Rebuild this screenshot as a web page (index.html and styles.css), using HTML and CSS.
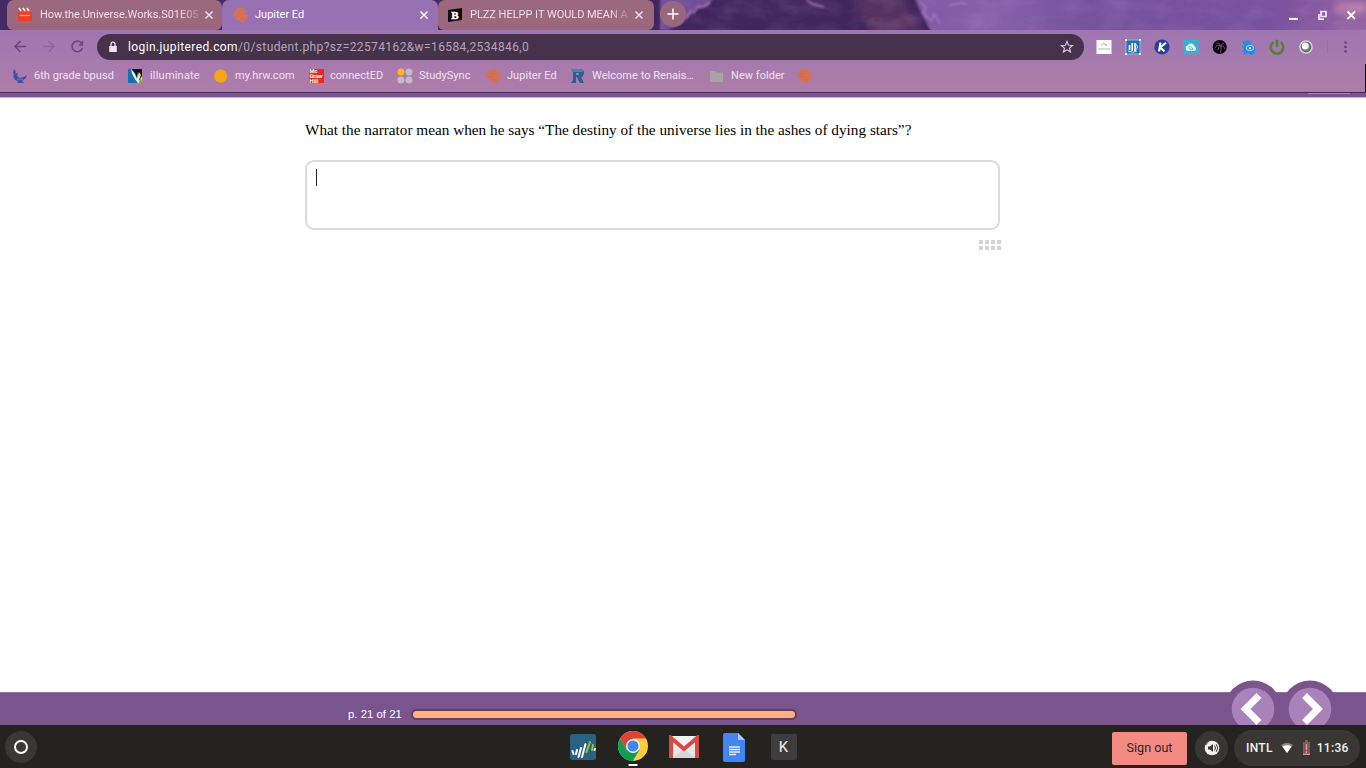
FILE: index.html
```html
<!DOCTYPE html>
<html lang="en">
<head>
<meta charset="utf-8">
<title>Jupiter Ed</title>
<link rel="stylesheet" href="styles.css">
</head>
<body>
<svg class="defs" width="0" height="0" aria-hidden="true">
  <symbol id="jupiter" viewBox="0 0 16 16">
    <path d="M3 3 6 1h6l2 1-3 1.5 4 .5-1 2-3 .5 1 1 3.5.5v3l-3 1.5-1 3-3-.5-2-2-3-.5L4 10 1 9l1-1.5L1 6l2-1Z" fill="#db704c"/>
    <path d="M4 6h6M3 9h5M8 12.4l4-.7M7 3.6l4-.2" stroke="#bd6d7b" stroke-width=".8"/>
  </symbol>
  <symbol id="close" viewBox="0 0 10 10"><path d="m1.5 1.5 7 7m0-7-7 7" stroke="currentColor" stroke-width="1.5" fill="none"/></symbol>
</svg>

<header class="browser">
  <div class="tabstrip">
    <svg class="sky" width="1366" height="30" viewBox="0 0 1366 30" preserveAspectRatio="none" aria-hidden="true">
      <defs>
        <linearGradient id="skyfill" x1="0" x2="1"><stop offset="0" stop-color="#432b63"/><stop offset=".49" stop-color="#4a2b65"/><stop offset=".66" stop-color="#7d58a2"/><stop offset=".72" stop-color="#8860aa"/><stop offset=".8" stop-color="#76529d"/><stop offset=".93" stop-color="#7951a0"/><stop offset="1" stop-color="#94639f"/></linearGradient>
        <filter id="soft" x="-10%" y="-40%" width="120%" height="180%"><feGaussianBlur stdDeviation="3"/></filter>
        <filter id="fine" x="-10%" y="-20%" width="120%" height="140%"><feGaussianBlur stdDeviation=".9"/></filter>
        <filter id="mist" x="0" y="0" width="100%" height="100%"><feTurbulence type="fractalNoise" baseFrequency=".03 .06" numOctaves="4" seed="3"/><feColorMatrix values="0 0 0 0 .66  0 0 0 0 .45  0 0 0 0 .8  1.8 0 0 0 -.75"/></filter>
      </defs>
      <rect width="1366" height="30" fill="url(#skyfill)"/>
      <path d="M650-8h262l8 18 14 28H650Z" fill="#3f275d" filter="url(#fine)"/>
      <path d="M850-4h52l22 38h-50Z" fill="#57335f" filter="url(#soft)"/>
      <path d="M660-2h53l-4 8-14 4-6 6-7 8-14 6h-8Z" fill="#73509a" filter="url(#fine)"/>
      <path d="m686 18 5-7 3 2 4-7 5 1 7-5M807 0l5 4 12 3M920 2l6 5-3 6 9 8 2-7 6 10M950 5l12-2 5 1" fill="none" stroke="#a878b5" stroke-width="1.4" filter="url(#fine)"/>
      <ellipse cx="1350" cy="8" rx="17" ry="6" fill="#b87aa9" filter="url(#soft)"/>
      <rect x="660" width="706" height="30" filter="url(#mist)" opacity=".18"/>
    </svg>
    <nav class="tabs">
      <div class="tab tab-video">
        <svg width="16" height="16" viewBox="0 0 16 16"><path d="M2 1h12v3H2z" fill="#b8615f"/><path d="m2 1 2 3m2-3 2 3m2-3 2 3" stroke="#fff" stroke-width="1.4"/><path d="M1 5h14v9H1z" fill="#ed3d27"/><path d="M3 8.5h10" stroke="#f5b5a8" stroke-width="1.2"/></svg>
        <span class="tab-title fade">How.the.Universe.Works.S01E05</span>
        <svg class="close" width="10" height="10"><use href="#close"/></svg>
      </div>
      <div class="tab tab-active">
        <svg width="16" height="16"><use href="#jupiter"/></svg>
        <span class="tab-title">Jupiter Ed</span>
        <svg class="close" width="10" height="10"><use href="#close"/></svg>
      </div>
      <div class="tab tab-brainly">
        <svg width="16" height="16" viewBox="0 0 16 16"><path d="m1 3 14-2v12L1 15Z" fill="#080407"/><text x="4.2" y="11.8" font-family="Liberation Serif, serif" font-size="11" font-weight="700" fill="#fff" stroke="#fff" stroke-width=".5">B</text></svg>
        <span class="tab-title fade">PLZZ HELPP IT WOULD MEAN A</span>
        <svg class="close" width="10" height="10"><use href="#close"/></svg>
      </div>
      <div class="new-tab"><svg width="12" height="12" viewBox="0 0 12 12"><path d="M6 .5v11M.5 6h11" stroke="#fff" stroke-width="1.5"/></svg></div>
    </nav>
    <div class="window-buttons">
      <svg width="76" height="20" viewBox="0 0 76 20"><path d="M4 13.9h9" stroke="#fff" stroke-width="2"/><path d="M36 6.5h5v5h-5zM34 9v5.2h5" fill="none" stroke="#f5e8fa" stroke-width="1.7"/><path d="m62.5 6.5 7.5 7.5m0-7.5L62.5 14" stroke="#fff" stroke-width="1.8"/></svg>
    </div>
  </div>

  <div class="toolbar">
    <svg class="nav-icons" width="97" height="34" viewBox="0 0 97 34" fill="none" stroke-width="1.6">
      <path d="M26 16.5H15m5.5-5.5L15 16.5l5.5 5.5" stroke="#684979"/>
      <path d="M43 16.5h11M48.5 11l5.5 5.5-5.5 5.5" stroke="#8d65a0"/>
      <path d="M81.2 12.8a5.3 5.3 0 1 0 1.2 5.2" stroke="#684979"/><path d="M83.2 10.5v5.2H78Z" fill="#684979"/>
    </svg>
    <div class="omnibox">
      <svg width="10" height="12" viewBox="0 0 10 12"><path d="M1.2 5h7.6v6H1.2z" fill="#eee4f2"/><path d="M3 5V3.1a2 2 0 0 1 4 0V5" fill="none" stroke="#eee4f2" stroke-width="1.3"/></svg>
      <span class="url"><b>login.jupitered.com</b>/0/student.php?sz=22574162&amp;w=16584,2534846,0</span>
      <svg class="star" width="14" height="14" viewBox="0 0 14 14"><path d="m7 1.5 1.6 3.7 4 .3-3.1 2.6 1 3.9L7 9.9 3.5 12l1-3.9L1.4 5.5l4-.3Z" fill="none" stroke="#dfcfe5" stroke-width="1.1"/></svg>
    </div>
    <div class="extensions">
      <svg width="16" height="16" viewBox="0 0 16 16"><path d="M.5 1h15v14H.5z" fill="#fff"/><path d="M5 6.5q3-4 5 0M9 5.5l2 1" fill="none" stroke="#879487" stroke-width=".8"/><path d="M2 10h12" stroke="#9cb08f" stroke-width=".9"/></svg>
      <svg width="16" height="16" viewBox="0 0 16 16"><path d="M1 1h14v14H1z" fill="#2471b2" stroke="#8fbcdf"/><path d="M0 0h2v2H0zm14 0h2v2h-2zM0 14h2v2H0zm14 0h2v2h-2z" fill="#e8f2f8"/><path d="M4.5 6v5M7.2 4v8M10 4v8" stroke="#fff" stroke-width="1.6"/><path d="M10 4.5q5 3.5 0 7M3 12q5 2.5 9 0" stroke="#d7ecf8" fill="none"/></svg>
      <svg width="16" height="16" viewBox="0 0 16 16"><circle cx="8" cy="8" r="7.6" fill="#273f9d"/><path d="M6.5 3.5 5 12.4M12 3.8 6.2 8.5l4.3 3.9" fill="none" stroke="#fff" stroke-width="2.1"/></svg>
      <svg width="16" height="16" viewBox="0 0 16 16"><rect x=".5" y=".8" width="15" height="14.4" rx="1" fill="#35b3cd"/><path d="M4.3 11.8a2.8 2.8 0 0 1 .5-5.2 3.6 3.6 0 0 1 6.8 1.2 2.1 2.1 0 0 1 0 4Z" fill="#fff"/><path d="M7 10.2a1.4 1.4 0 1 1 1.5-2l1.5 2H7" fill="none" stroke="#35b3cd"/></svg>
      <svg width="16" height="16" viewBox="0 0 16 16"><circle cx="7.7" cy="8" r="7.1" fill="#09030c"/><path d="M8.6 14q1-4 .4-7M9 7Q4 5 3 9M9 7Q6 7 6 11M9 7Q7 3 4.5 4M9 7q3-1 4 3M9 7q1-3 3-3" fill="none" stroke="#79517a" stroke-width=".9"/></svg>
      <svg width="16" height="16" viewBox="0 0 16 16"><path d="m2 1 3 2 3-2 2 1 1 3 4 3v6l-4 2-3-2-5 2 1-3-2-1 2-2-3-3h3Z" fill="#258ce4"/><ellipse cx="10" cy="9" rx="3.6" ry="2.7" fill="none" stroke="#a8d5ff"/><circle cx="10" cy="9" r="1.2" fill="#eaf7ff"/></svg>
      <svg width="16" height="16" viewBox="0 0 16 16"><path d="M4.3 3.2A6.3 6.3 0 1 0 11.7 3.2M8 .8v7" fill="none" stroke="#568238" stroke-width="2.7"/></svg>
      <svg width="16" height="16" viewBox="0 0 16 16"><circle cx="8" cy="8" r="6.8" fill="#d6d0d4"/><circle cx="8" cy="8" r="4.8" fill="#708177" stroke="#566559"/><circle cx="7.2" cy="7" r="3.4" fill="#fff"/></svg>
    </div>
    <svg class="menu" width="36" height="20" viewBox="0 0 36 20"><path d="M.5 4v12" stroke="#99709f"/><g fill="#68456f"><circle cx="18.5" cy="5.5" r="1.3"/><circle cx="18.5" cy="10" r="1.3"/><circle cx="18.5" cy="14.5" r="1.3"/></g></svg>
  </div>

  <nav class="bookmarks">
    <span><svg width="16" height="16" viewBox="0 0 16 16"><path d="m2 1 2 3-1 2 3-1-1 3 3 2 4-1 3-2-1 3-4 3 2 2H5l1-2-3-1-2-4 1-1-1-2Z" fill="#3d50a1"/><path d="m5 11 6 .3" stroke="#7c78bd"/></svg>6th grade bpusd</span>
    <span><svg width="16" height="16" viewBox="0 0 16 16"><path d="M1 1h14v14H1z" fill="#151015"/><path d="M1 1h4q5 5 6 14H1z" fill="#1870ad"/><path d="M4 1q1 7 7 14h4V8l-3 5q1-4-1-9l-1 7Q8 5 4 1Z" fill="#effaf4"/><path d="m12 4-.5 9L14 7" fill="#f1d848"/><path d="m14 9-2 6h3" fill="#64a43b"/></svg><em class="t-illuminate">illuminate</em></span>
    <span><svg width="16" height="16" viewBox="0 0 16 16"><circle cx="7.6" cy="8" r="6.6" fill="#f7a512"/></svg><em>my.hrw.com</em></span>
    <span><svg width="16" height="16" viewBox="0 0 16 16"><path d="M1 1h15v14H1z" fill="#ed2624"/><g fill="#fff" font-family="Roboto, sans-serif" font-size="5.8" font-weight="700"><text x="1.5" y="5">Mc</text><text x="1.5" y="10" textLength="13">Graw</text><text x="1.5" y="14.6">Hill</text></g></svg><em>connectED</em></span>
    <span><svg width="16" height="16" viewBox="0 0 16 16"><circle cx="3.9" cy="4" r="3.5" fill="#ffb51b"/><g fill="#c4bcc5"><circle cx="12" cy="4" r="3.5"/><circle cx="3.9" cy="12.1" r="3.5"/><circle cx="12" cy="12.1" r="3.5"/></g></svg><em>StudySync</em></span>
    <span><svg width="16" height="16"><use href="#jupiter"/></svg><em>Jupiter Ed</em></span>
    <span><svg width="16" height="16" viewBox="0 0 16 16"><path d="M1 1h9q4 0 4 4 0 3-3 4l3 6h-4L7 9H6v6H1l2-3V4Z" fill="#245f98"/><path d="M1 1h9q3 0 3 3H3Z" fill="#4f80ae"/><path d="M6 5h3v2H6z" fill="#a27baf"/></svg><em>Welcome to Renais…</em></span>
    <span><svg width="16" height="16" viewBox="0 0 16 16"><path d="M1 3h5l1.5 1.5H14V14H1Z" fill="#a5a5a5"/></svg><em>New folder</em></span>
    <span><svg width="16" height="16"><use href="#jupiter"/></svg></span>
  </nav>
  <div class="page-edge"><i></i></div>
</header>

<main class="content">
  <p class="question">What the narrator mean when he says “The destiny of the universe lies in the ashes of dying stars”?</p>
  <div class="answer"><i class="caret"></i></div>
  <svg class="grip" width="22" height="10" viewBox="0 0 22 10" fill="#d5d5d5"><path d="M0 0h4v4H0zm6 0h4v4H6zm6 0h4v4h-4zm6 0h4v4h-4zM0 6h4v4H0zm6 0h4v4H6zm6 0h4v4h-4zm6 0h4v4h-4z"/></svg>
</main>

<footer class="pager">
  <span class="page-number">p. 21 of 21</span>
  <div class="progress"></div>
  <svg class="page-buttons" width="140" height="45" viewBox="0 0 140 45">
    <g fill="#7a548c"><circle cx="27" cy="29" r="28.5"/><circle cx="84" cy="29" r="28.5"/></g>
    <g fill="#a882b9"><circle cx="27" cy="29" r="21.3"/><circle cx="84" cy="29" r="21.3"/></g>
    <path d="M33 15.5 19.5 29 33 42.5M78.5 15.5 92 29 78.5 42.5" fill="none" stroke="#fff" stroke-width="7"/>
  </svg>
</footer>

<section class="shelf">
  <div class="launcher"><i></i></div>
  <div class="apps">
    <svg width="28" height="28" viewBox="0 0 28 28"><rect x="1" y="1" width="26" height="26" rx="2.5" fill="#296281"/><g fill="none" stroke="#fff" stroke-width="2" stroke-linecap="round"><path d="m3.5 18 1 3M8 17l-1 4M12 15 9.5 24M16.5 11l-3.5 13M26 16l-.5 1"/></g><path d="m21 9-3.5 10M24 12l-1 5" stroke="#9bc243" stroke-width="2" stroke-linecap="round"/></svg>
    <svg width="32" height="42" viewBox="0 0 32 42"><circle cx="16" cy="20" r="15" fill="#ffcd40"/><path d="M3 12.5A15 15 0 0 1 29 12.5H16L9.5 23.8Z" fill="#db4437"/><path d="M3 12.5A15 15 0 0 0 15.8 35l6.7-11.3-13 .1Z" fill="#0f9d58"/><circle cx="16" cy="20" r="7" fill="#f1f1f1"/><circle cx="16" cy="20" r="5.5" fill="#4285f4"/><path d="M11.5 39h9" stroke="#fff" stroke-width="2"/></svg>
    <svg width="30" height="24" viewBox="0 0 30 24"><rect y="1" width="30" height="22" rx="2" fill="#e7e7e7"/><path d="m4 23 11-10 11 10Z" fill="#d5d5d5"/><path d="M2 23V3l13 11L28 3v20" fill="none" stroke="#d44c45" stroke-width="4"/><path d="M4 1h22L15 11Z" fill="#f3f3f3"/></svg>
    <svg width="22" height="29" viewBox="0 0 22 29"><path d="M2 0h13l7 7v20a2 2 0 0 1-2 2H2a2 2 0 0 1-2-2V2a2 2 0 0 1 2-2Z" fill="#4285f4"/><path d="M15 0v7h7Z" fill="#a9c8fc"/><path d="M6 14h11M6 16.5h11M6 19h11M6 21.5h7" stroke="#e8f0fe" stroke-width="1.4"/></svg>
    <div class="app-k">K</div>
  </div>
  <div class="sign-out">Sign out</div>
  <div class="speaker"><svg width="16" height="16" viewBox="0 0 16 16"><circle cx="8" cy="8" r="7.3" fill="#f2f2f2"/><path d="M4 6.5h2L9 4v8L6 9.5H4Z" fill="#383735"/><path d="M10.5 5.5q2 2.5 0 5M12.2 4.2q3 3.8 0 7.6M1.5 5 4 2.5" fill="none" stroke="#383735" stroke-width="1"/></svg></div>
  <div class="status">
    <span>INTL</span>
    <svg class="wifi" width="14" height="12" viewBox="0 0 14 12"><path d="M1 3q6-4 12 0L7 11Z" fill="#898886"/><path d="M2.4 4.6q4.6-2.5 9.2 0L7 11Z" fill="#fff"/></svg>
    <svg class="battery" width="9" height="15" viewBox="0 0 9 15"><path d="M3 0h3v2H3zM1 2h7v13H1z" fill="#80595b"/><path d="M4.5 4v6M4.5 11v2M1 14.3h7" stroke="#e99499" stroke-width="1.3"/></svg>
    <span>11:36</span>
  </div>
</section>
</body>
</html>
```
FILE: styles.css
```css
* { box-sizing: border-box; }
body { margin: 0; width: 1366px; height: 768px; overflow: hidden; display: flex; flex-direction: column; background: #fff; font-family: Roboto, sans-serif; }
svg { display: block; flex: none; }
.defs { position: absolute; }

.browser { height: 98px; flex: none; background: linear-gradient(#9670b0 0, #9f76b0 32px, #a77aae 60px, #ad7da9 92px); }
.tabstrip { position: relative; height: 30px; display: flex; justify-content: space-between; }
.sky { position: absolute; inset: 0; }
.tabs { position: relative; display: flex; align-items: stretch; padding-left: 7px; }
.tab { display: flex; align-items: center; height: 30px; padding: 0 8px 1px 10px; color: #eddfec; font-size: 11px; }
.tab-title { flex: 1; margin-left: 7px; white-space: nowrap; line-height: 16px; }
.tab-video { width: 215px; background: #9b687d; border-radius: 7px 7px 6px 6px; }
.tab-active { width: 216px; padding-right: 9px; background: #9871b2; color: #fff; border-radius: 7px 7px 0 0; }
.tab-brainly { width: 216px; padding: 0 10px 1px 9px; background: #9b687d; border-radius: 7px 7px 6px 6px; }
.tab-video .tab-title { letter-spacing: -.03px; margin-right: 5px; }
.tab-brainly .tab-title { letter-spacing: -.03px; margin-right: 6px; }
.fade { -webkit-mask-image: linear-gradient(90deg, #000 88%, transparent 103%); mask-image: linear-gradient(90deg, #000 88%, transparent 103%); }
.new-tab { width: 26px; height: 26px; margin: 1px 0 0 6px; display: flex; align-items: center; justify-content: center; border-radius: 50%; background: #99677d; }
.window-buttons { position: relative; padding: 5px 5px 0 0; }

.toolbar { height: 34px; display: flex; align-items: center; }
.omnibox { width: 987px; height: 26px; margin-bottom: 1px; padding: 0 10px 0 11px; display: flex; align-items: center; border-radius: 13px; background: #46334b; color: #b5a4b9; font-size: 12px; }
.url { margin-left: 10px; letter-spacing: .39px; white-space: nowrap; }
.url b { color: #fff; font-weight: 400; }
.star { margin-left: auto; }
.extensions { display: flex; gap: 12.9px; margin-left: 12px; }
.menu { margin-left: 13px; }

.bookmarks { height: 28px; display: grid; grid-template-columns: 115px 86px 95px 89px 88px 85px 139px 87px 20px; align-items: center; padding: 0 0 5px 12px; color: #f0e2f0; font-size: 11px; border-right: 1px solid #130c18; }
.bookmarks span { display: flex; align-items: center; gap: 6px; white-space: nowrap; letter-spacing: .04px; }
.bookmarks em { font-style: normal; }
.bookmarks .t-illuminate { margin-left: 1px; letter-spacing: .2px; }
.page-edge { height: 6px; display: flex; justify-content: flex-end; padding-right: 16px; border-top: 1px solid #49285e; border-bottom: 1px solid #c5b3ca; background: #7a548c; }
.page-edge i { width: 42px; height: 1px; background: #a18aae; }

.content { flex: 1; padding: 22px 0 0 305px; }
.question { margin: 0; height: 40px; color: #000; font: 15.26px/20px "Liberation Serif", serif; white-space: nowrap; }
.answer { width: 695px; height: 70px; padding: 7px 8px; border: 2px solid #dadada; border-radius: 9px; }
.caret { display: block; width: 1px; height: 17px; margin-left: .5px; background: #222; }
.grip { margin: 10px 0 0 674px; }

.pager { height: 33px; flex: none; display: flex; align-items: flex-start; background: #7a548c; border-top: 1px solid #8f739e; }
.page-number { width: 64px; margin: 14px 0 0 348px; color: #fff; font: 11.4px/14px "Liberation Sans", sans-serif; white-space: nowrap; }
.progress { width: 386px; height: 11px; margin-top: 16px; margin-left: -1px; border: 2px solid #613e66; border-radius: 6px; background: #ffb27f; }
.page-buttons { margin: -13px 0 0 429px; }

.shelf { height: 43px; flex: none; display: flex; align-items: center; background: #24231f; color: #f4f2ef; }
.launcher { width: 32px; height: 32px; margin-left: 5px; display: grid; place-items: center; border-radius: 50%; background: #393834; }
.launcher i { width: 14px; height: 14px; border: 2px solid #fff; border-radius: 50%; }
.apps { display: flex; align-items: center; margin: 1px 0 0 532px; width: 228px; }
.apps svg:nth-child(2) { margin-left: 19.5px; }
.apps svg:nth-child(3) { margin-left: 20px; }
.apps svg:nth-child(4) { margin-left: 24px; }
.app-k { width: 26px; height: 26px; margin-left: 26px; display: grid; place-items: center; background: #3e3d3d; border-radius: 2px; font-size: 15px; }
.sign-out { width: 75px; height: 33px; margin-left: 315px; margin-top: 3px; padding-bottom: 1px; display: grid; place-items: center; border-radius: 2px; background: #f48b83; color: #332423; font-size: 12.6px; }
.speaker { width: 33px; height: 34px; margin: 3px 0 0 8px; display: grid; place-items: center; border-radius: 50%; background: #383733; }
.status { width: 126px; height: 36px; margin: 2px 0 0 6px; padding-left: 12px; display: flex; align-items: center; border-radius: 18px; background: #383733; font-size: 12px; font-weight: 500; letter-spacing: .3px; }
.wifi { margin-left: 7px; }
.battery { margin: 0 6px 0 8px; }
```
